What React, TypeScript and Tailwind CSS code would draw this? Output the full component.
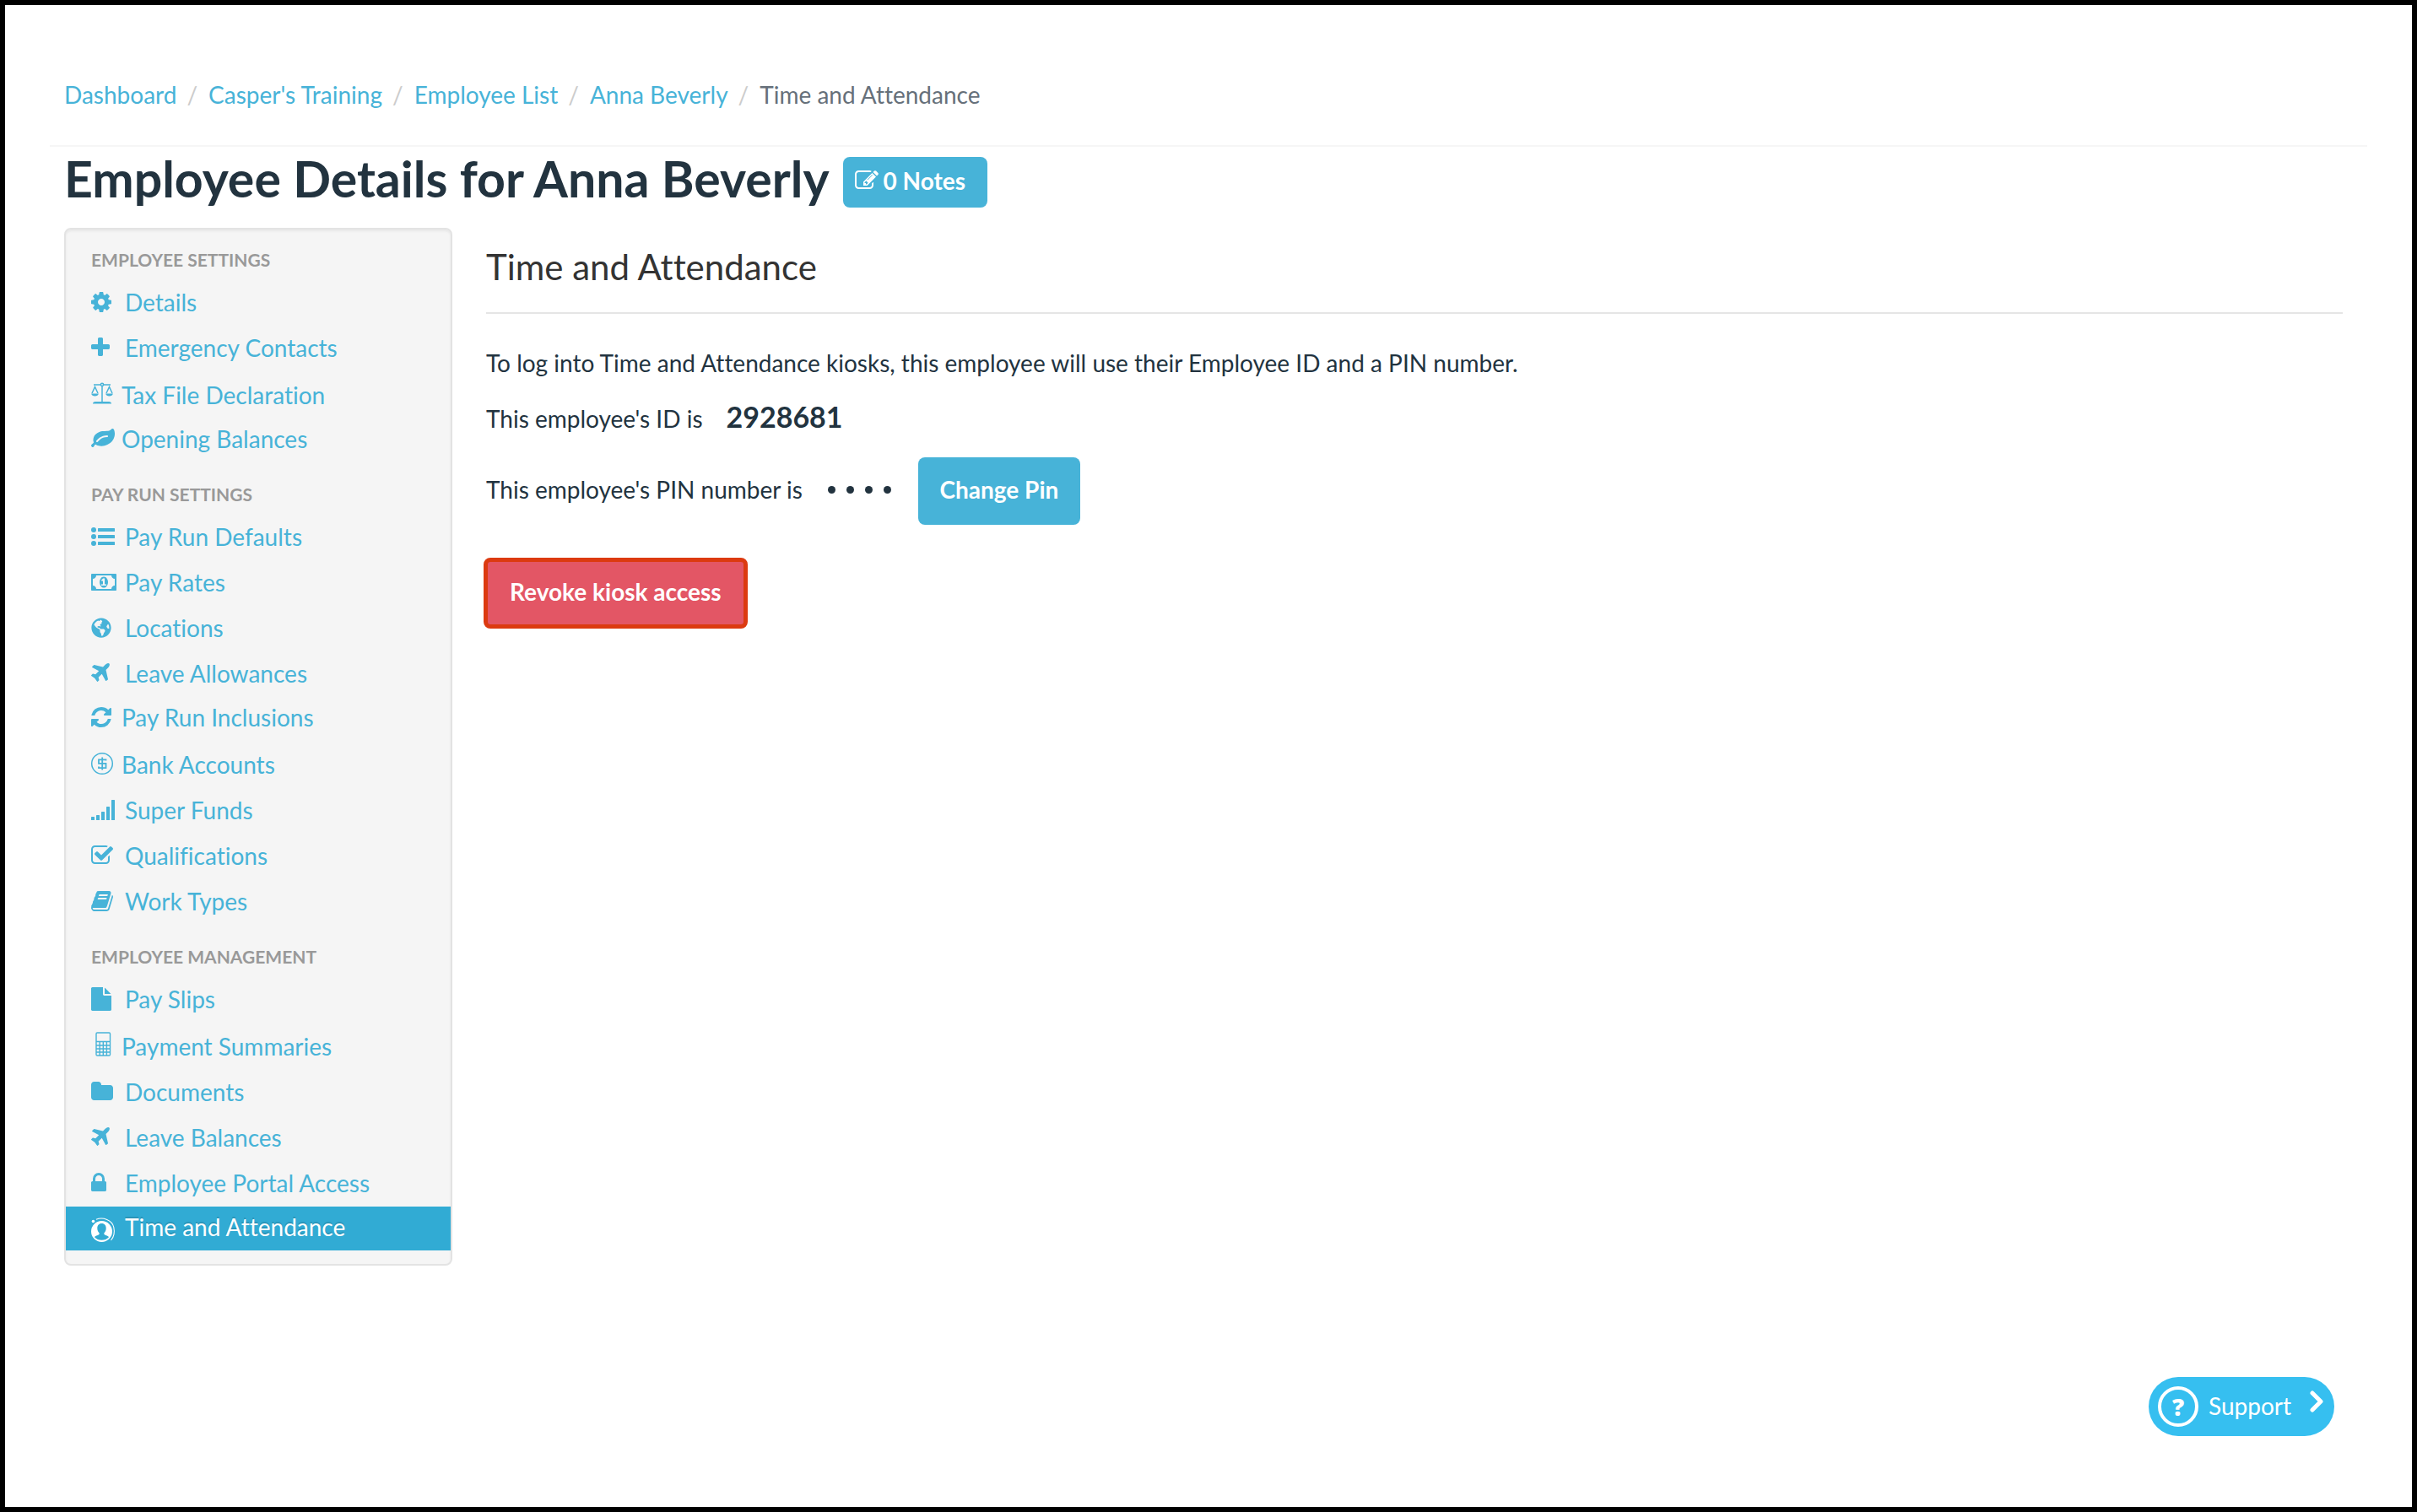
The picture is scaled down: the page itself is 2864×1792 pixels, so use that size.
import React from "react";
import { FaGlobeAmericas } from "react-icons/fa";

type IconName =
  | "cog" | "plus" | "scales" | "leaf" | "list" | "money" | "globe" | "plane" | "refresh" | "dollar"
  | "signal" | "check" | "book" | "file" | "calculator" | "folder" | "lock" | "person" | "edit";

/* Solid glyphs: left edge of the drawing in the 1792-unit grid, and its outline. */
const glyphs: Partial<Record<IconName, [number, string]>> = {
  cog: [128, "M1152 896q0-106-75-181t-181-75-181 75-75 181 75 181 181 75 181-75 75-181zm512-109v222q0 12-8 23t-20 13l-185 28q-19 54-39 91 35 50 107 138 10 12 10 25t-9 23q-27 37-99 108t-94 71q-12 0-26-9l-138-108q-44 23-91 38-16 136-29 186-7 28-36 28h-222q-14 0-24.5-8.5t-11.5-21.5l-28-184q-49-16-90-37l-141 107q-10 9-25 9-14 0-25-11-126-114-165-168-7-10-7-23 0-12 8-23 15-21 51-66.5t54-70.5q-27-50-41-99l-183-27q-13-2-21-12.5t-8-23.5v-222q0-12 8-23t19-13l186-28q14-46 39-92-40-57-107-138-10-12-10-24 0-10 9-23 26-36 98.5-107.5t94.5-71.5q13 0 26 10l138 107q44-23 91-38 16-136 29-186 7-28 36-28h222q14 0 24.5 8.5t11.5 21.5l28 184q49 16 90 37l142-107q9-9 24-9 13 0 25 10 129 119 165 170 7 8 7 22 0 12-8 23-15 21-51 66.5t-54 70.5q26 50 41 98l183 28q13 2 21 12.5t8 23.5z"],
  plus: [192, "M1600 736v192q0 40-28 68t-68 28h-416v416q0 40-28 68t-68 28h-192q-40 0-68-28t-28-68v-416h-416q-40 0-68-28t-28-68v-192q0-40 28-68t68-28h416v-416q0-40 28-68t68-28h192q40 0 68 28t28 68v416h416q40 0 68 28t28 68z"],
  leaf: [0, "M1280 704q0-26-19-45t-45-19q-172 0-318 49.5t-259.5 134-235.5 219.5q-19 21-19 45 0 26 19 45t45 19q24 0 45-19 27-24 74-71t67-66q137-124 268.5-176t313.5-52q26 0 45-19t19-45zm512-198q0 95-20 193-46 224-184.5 383t-357.5 268q-214 108-438 108-148 0-286-47-15-5-88-42t-96-37q-16 0-39.5 32t-45 70-52.5 70-60 32q-43 0-63.5-17.5t-45.5-59.5q-2-4-6-11t-5.5-10-3-9.5-1.5-13.5q0-35 31-73.5t68-65.5 68-56 31-48q0-4-14-38t-16-44q-9-51-9-104 0-115 43.5-220t119-184.5 170.5-139 204-95.5q55-18 145-25.5t179.5-9 178.5-6 163.5-24 113.5-56.5l29.5-29.5 29.5-28 27-20 36.5-16 43.5-4.5q39 0 70.5 46t47.5 112 24 124 8 96z"],
  money: [0, "M768 1152h384v-96h-128v-448h-114l-148 137 77 80q42-37 55-57h2v288h-128v96zm512-256q0 70-21 142t-59.5 134-101.5 101-138 39-138-39-101.5-101-59.5-134-21-142 21-142 59.5-134 101.5-101 138-39 138 39 101.5 101 59.5 134 21 142zm512 256v-512q-106 0-181-75t-75-181h-1152q0 106-75 181t-181 75v512q106 0 181 75t75 181h1152q0-106 75-181t181-75zm128-832v1152q0 26-19 45t-45 19h-1792q-26 0-45-19t-19-45v-1152q0-26 19-45t45-19h1792q26 0 45 19t19 45z"],
  plane: [192, "M1568 160q44 52 12 148t-108 172l-161 161 160 696q5 19-12 33l-128 96q-7 6-19 6-4 0-7-1-15-3-21-16l-279-508-259 259 53 194q5 17-8 31l-96 96q-9 9-23 9h-2q-15-2-24-13l-189-252-252-189q-11-7-13-23-1-13 9-25l96-97q9-9 23-9 6 0 8 1l194 53 259-259-508-279q-14-8-17-24-2-16 9-27l128-128q14-13 30-8l665 159 160-160q76-76 172-108t148 12z"],
  refresh: [128, "M1639 1056q0 5-1 7-64 268-268 434.5t-478 166.5q-146 0-282.5-55t-243.5-157l-129 129q-19 19-45 19t-45-19-19-45v-448q0-26 19-45t45-19h448q26 0 45 19t19 45-19 45l-137 137q71 66 161 102t187 36q134 0 250-65t186-179q11-17 53-117 8-23 30-23h192q13 0 22.5 9.5t9.5 22.5zm25-800v448q0 26-19 45t-45 19h-448q-26 0-45-19t-19-45 19-45l138-138q-148-137-349-137-134 0-250 65t-186 179q-11 17-53 117-8 23-30 23h-199q-13 0-22.5-9.5t-9.5-22.5v-7q65-268 270-434.5t480-166.5q146 0 284 55.5t245 156.5l130-129q19-19 45-19t45 19 19 45z"],
  check: [64, "M1472 930v318q0 119-84.5 203.5t-203.5 84.5h-832q-119 0-203.5-84.5t-84.5-203.5v-832q0-119 84.5-203.5t203.5-84.5h832q63 0 117 25 15 7 18 23 3 17-9 29l-49 49q-10 10-23 10-3 0-9-2-23-6-45-6h-832q-66 0-113 47t-47 113v832q0 66 47 113t113 47h832q66 0 113-47t47-113v-254q0-13 9-22l64-64q10-10 23-10 6 0 12 3 20 8 20 29zm231-489l-814 814q-24 24-57 24t-57-24l-430-430q-24-24-24-57t24-57l110-110q24-24 57-24t57 24l263 263 647-647q24-24 57-24t57 24l110 110q24 24 24 57t-24 57z"],
  book: [64, "M1703 478q40 57 18 129l-275 906q-19 64-76.5 107.5t-122.5 43.5h-923q-77 0-148.5-53.5t-99.5-131.5q-24-67-2-127 0-4 3-27t4-37q1-8-3-21.5t-3-19.5q2-11 8-21t16.5-23.5 16.5-23.5q23-38 45-91.5t30-91.5q3-10 .5-30t-.5-28q3-11 17-28t17-23q21-36 42-92t25-90q1-9-2.5-32t.5-28q4-13 22-30.5t22-22.5q19-26 42.5-84.5t27.5-96.5q1-8-3-25.5t-2-26.5q2-8 9-18t18-23 17-21q8-12 16.5-30.5t15-35 16-36 19.5-32 26.5-23.5 36-11.5 47.5 5.5l-1 3q38-9 51-9h761q74 0 114 56t18 130l-274 906q-36 119-71.5 153.5t-128.5 34.5h-869q-27 0-38 15-11 16-1 43 24 70 144 70h923q29 0 56-15.5t35-41.5l300-987q7-22 5-57 38 15 59 43zm-1064 2q-4 13 2 22.5t20 9.5h608q13 0 25.5-9.5t16.5-22.5l21-64q4-13-2-22.5t-20-9.5h-608q-13 0-25.5 9.5t-16.5 22.5zm-83 256q-4 13 2 22.5t20 9.5h608q13 0 25.5-9.5t16.5-22.5l21-64q4-13-2-22.5t-20-9.5h-608q-13 0-25.5 9.5t-16.5 22.5z"],
  file: [128, "M1152 512v-472q22 14 36 28l408 408q14 14 28 36h-472zm-128 32q0 40 28 68t68 28h544v1056q0 40-28 68t-68 28h-1344q-40 0-68-28t-28-68v-1600q0-40 28-68t68-28h800v544z"],
  folder: [64, "M1728 608v704q0 92-66 158t-158 66h-1216q-92 0-158-66t-66-158v-960q0-92 66-158t158-66h320q92 0 158 66t66 158v32h672q92 0 158 66t66 158z"],
  lock: [320, "M640 768h512v-192q0-106-75-181t-181-75-181 75-75 181v192zm832 96v576q0 40-28 68t-68 28h-960q-40 0-68-28t-28-68v-576q0-40 28-68t68-28h32v-192q0-184 132-316t316-132 316 132 132 316v192h32q40 0 68 28t28 68z"],
  edit: [0, "M888 1184l116-116-152-152-116 116v56h96v96h56zm440-720q-16-16-33 1l-350 350q-17 17-1 33t33-1l350-350q17-17 1-33zm80 594v190q0 119-84.5 203.5t-203.5 84.5h-832q-119 0-203.5-84.5t-84.5-203.5v-832q0-119 84.5-203.5t203.5-84.5h832q63 0 117 25 15 7 18 23 3 17-9 29l-49 49q-14 14-32 8-23-6-45-6h-832q-66 0-113 47t-47 113v832q0 66 47 113t113 47h832q66 0 113-47t47-113v-126q0-13 9-22l64-64q15-15 35-7t20 29zm-96-738l288 288-672 672h-288v-288zm444 132l-92 92-288-288 92-92q28-28 68-28t68 28l152 152q28 28 28 68t-28 68z"],
};

/* Glyphs built from simple shapes on a 30 x 28 grid. */
const drawings: Partial<Record<IconName, React.ReactNode>> = {
  list: (
    <g fill="currentColor">
      {[6, 14, 22].map((y) => (
        <g key={y}>
          <circle cx="3" cy={y} r="3" />
          <rect x="8" y={y - 2} width="20" height="4" rx="0.5" />
        </g>
      ))}
    </g>
  ),
  signal: (
    <g fill="currentColor">
      <rect x="0" y="22" width="4" height="4" rx="0.5" />
      <rect x="6" y="20" width="4" height="6" rx="0.5" />
      <rect x="12" y="16" width="4" height="10" rx="0.5" />
      <rect x="18" y="10" width="4" height="16" rx="0.5" />
      <rect x="24" y="2" width="4" height="24" rx="0.5" />
    </g>
  ),
  scales: (
    <g fill="none" stroke="currentColor" strokeWidth="1.5">
      <path d="M3 2h8.500M14.500 2H23M13 3.500V22" />
      <circle cx="13" cy="1.800" r="1.600" />
      <path d="M1 12L4.500 4.500 8 12M18 12l3.500-7.500L25 12" />
      <path d="M0 12.500h9Q8 15.500 4.500 15.500T0 12.500zM17 12.500h9Q25 15.500 21.500 15.500T17 12.500zM2 24.500q0-2.500 3-2.500h16q3 0 3 2.500z" fill="currentColor" stroke="none" />
    </g>
  ),
  dollar: (
    <g fill="none" stroke="currentColor">
      <circle cx="13" cy="13" r="12.300" strokeWidth="1.500" />
      <path d="M17.500 9.500V8.300H9v4.500h8.500v5.400H9V16.500M13.200 5.500V20.500" strokeWidth="1.800" />
    </g>
  ),
  calculator: (
    <g fill="none" stroke="currentColor" strokeWidth="1.400">
      <rect x="6" y="-2" width="16.500" height="27" rx="1.200" />
      <path d="M6 8.500h16.500M6 13h16.500M6 17h16.500M6 21h16.500M10.200 8.500V25M14.300 8.500V25M18.400 8.500V25" />
    </g>
  ),
  person: (
    <g>
      <circle cx="12.500" cy="19.500" r="12.500" fill="currentColor" />
      <path d="M12.500 10c3.600 0 5.200 2.500 5.200 5.700 0 2.300-1 4.300-2.300 5.500v1.500c0 1 4.600 1.700 5.600 3.500-2.200 2.300-5 3.600-8.500 3.600s-6.300-1.300-8.500-3.600c1-1.800 5.600-2.500 5.600-3.500v-1.500c-1.300-1.200-2.300-3.200-2.300-5.500 0-3.200 1.600-5.700 5.200-5.700z" fill="#31abd4" />
      <path d="M6 5.300C14 2 25 6 26.800 14.500 28 20 27 26 23.500 30" fill="none" stroke="currentColor" strokeWidth="1.100" />
      <circle cx="2.500" cy="7.500" r="1.800" fill="currentColor" />
    </g>
  ),
};

function Icon({ name }: { name: IconName }) {
  const box = "h-7 w-[30px] shrink-0 overflow-visible";
  if (name === "globe") {
    return (
      <span className="flex h-7 w-[30px] shrink-0 items-center">
        <FaGlobeAmericas className="size-6" aria-hidden />
      </span>
    );
  }
  const glyph = glyphs[name];
  if (glyph) {
    return (
      <svg className={box} viewBox={`${glyph[0]} 0 1920 1792`} fill="currentColor" aria-hidden>
        <path d={glyph[1]} />
      </svg>
    );
  }
  return (
    <svg className={box} viewBox="0 0 30 28" aria-hidden>
      {drawings[name]}
    </svg>
  );
}

type Item = { label: string; icon: IconName; gap?: "none" | "wide"; near?: boolean; active?: boolean };

const sections: { title: string; items: Item[] }[] = [
  {
    title: "EMPLOYEE SETTINGS",
    items: [
      { label: "Details", icon: "cog", gap: "none" },
      { label: "Emergency Contacts", icon: "plus" },
      { label: "Tax File Declaration", icon: "scales", gap: "wide", near: true },
      { label: "Opening Balances", icon: "leaf", gap: "none", near: true },
    ],
  },
  {
    title: "PAY RUN SETTINGS",
    items: [
      { label: "Pay Run Defaults", icon: "list", gap: "none" },
      { label: "Pay Rates", icon: "money" },
      { label: "Locations", icon: "globe" },
      { label: "Leave Allowances", icon: "plane" },
      { label: "Pay Run Inclusions", icon: "refresh", gap: "none", near: true },
      { label: "Bank Accounts", icon: "dollar", gap: "wide", near: true },
      { label: "Super Funds", icon: "signal" },
      { label: "Qualifications", icon: "check" },
      { label: "Work Types", icon: "book" },
    ],
  },
  {
    title: "EMPLOYEE MANAGEMENT",
    items: [
      { label: "Pay Slips", icon: "file", gap: "none" },
      { label: "Payment Summaries", icon: "calculator", gap: "wide", near: true },
      { label: "Documents", icon: "folder" },
      { label: "Leave Balances", icon: "plane" },
      { label: "Employee Portal Access", icon: "lock" },
      { label: "Time and Attendance", icon: "person", gap: "none", active: true },
    ],
  },
];

const crumbs = ["Dashboard", "Casper's Training", "Employee List", "Anna Beverly"];

function Sidebar() {
  return (
    <nav
      aria-label="Employee"
      className="w-[460px] shrink-0 rounded-lg border-2 border-[#e3e3e3] bg-[#f5f5f5] pb-4 shadow-[inset_0_2px_3px_rgba(0,0,0,0.06)]"
    >
      {sections.map((s, i) => (
        <section key={s.title}>
          <h2 className={"px-[30px] pb-2 text-[21px] leading-9 font-bold text-[#999999] " + (i === 0 ? "pt-[18px]" : "pt-5")}>
            {s.title}
          </h2>
          <ul>
            {s.items.map((it) => (
              <li key={it.label} className={it.gap === "none" ? "" : it.gap === "wide" ? "pt-1" : "pt-0.5"}>
                <a
                  href="#"
                  aria-current={it.active ? "page" : undefined}
                  className={
                    "flex h-[52px] items-center px-[30px] pb-1 " +
                    (it.active ? "bg-[#31abd4] text-white [text-shadow:0_-2px_0_rgba(0,0,0,0.15)]" : "text-[#47b3d8]")
                  }
                >
                  <Icon name={it.icon} />
                  <span className={it.near ? "ml-1.5" : "ml-2.5"}>{it.label}</span>
                </a>
              </li>
            ))}
          </ul>
        </section>
      ))}
    </nav>
  );
}

export default function App() {
  return (
    <div className="min-h-screen border-6 border-black bg-white px-[53px] font-['Lato',sans-serif] text-[28px] leading-9 text-[#22333f] [font-variant-ligatures:none]">
      <nav aria-label="Breadcrumb" className="border-b-2 border-[#f6f6f6] px-[17px] pt-[88px] pb-[42px]">
        <ol className="flex">
          {crumbs.map((c) => (
            <li key={c} className="flex">
              <a href="#" className="text-[#47b3d8]">{c}</a>
              <span className="px-3 pr-[13px] text-[#cccccc]">/</span>
            </li>
          ))}
          <li aria-current="page" className="text-[#66707a]">Time and Attendance</li>
        </ol>
      </nav>

      <header className="flex items-start gap-4 px-[17px] pt-3">
        <h1 className="text-[59px] leading-[52px] font-bold">Employee Details for Anna Beverly</h1>
        <button type="button" className="flex h-[60px] items-center rounded-lg bg-[#47b3d8] pr-[26px] pb-1 pl-[14px] font-bold text-white">
          <Icon name="edit" />
          <span className="ml-1">0 Notes</span>
        </button>
      </header>

      <div className="flex items-start gap-10 pr-[29px] pl-[17px] pt-6">
        <Sidebar />
        <main className="min-w-0 flex-1">
          <h2 className="border-b-2 border-[#e5e5e5] pt-[22px] pb-[30px] text-[42px] leading-12 text-[#333333]">Time and Attendance</h2>
          <p className="pt-10">
            To log into Time and Attendance kiosks, this employee will use their Employee ID and a PIN number.
          </p>
          <p className="flex items-baseline gap-7 pt-[26px]">
            This employee's ID is <strong className="text-[34px] leading-10">2928681</strong>
          </p>
          <div className="flex items-center pt-7">
            <span className="pb-1">This employee's PIN number is</span>
            <span className="ml-[30px] flex gap-[13px] pb-1" role="img" aria-label="Hidden PIN">
              {[0, 1, 2, 3].map((i) => (
                <span key={i} className="size-[9px] rounded-full bg-[#22333f]" />
              ))}
            </span>
            <button type="button" className="ml-8 h-20 w-48 rounded-lg bg-[#47b3d8] pb-1 font-bold text-white">
              Change Pin
            </button>
          </div>
          <button
            type="button"
            className="mt-[39px] -ml-[3px] h-[84px] rounded-lg border-5 border-[#dc3a10] bg-[#e35665] px-[26px] pb-1 font-bold text-white"
          >
            Revoke kiosk access
          </button>
        </main>
      </div>

      <button
        type="button"
        className="fixed right-[98px] bottom-[90px] flex h-[70px] w-[220px] items-center rounded-full bg-[#36bff0] pl-[11px] text-white"
      >
        <span className="flex size-12 items-center justify-center rounded-full border-4 border-white font-['Open_Sans',sans-serif] text-[28px] leading-none font-extrabold">?</span>
        <span className="ml-3 pb-0.5">Support</span>
        <svg className="mb-3 ml-[22px] h-[26px] w-4" viewBox="0 0 16 26" fill="none" stroke="currentColor" strokeWidth="5" strokeLinecap="round" strokeLinejoin="round" aria-hidden>
          <path d="M3 3l10 10L3 23" />
        </svg>
      </button>
    </div>
  );
}
